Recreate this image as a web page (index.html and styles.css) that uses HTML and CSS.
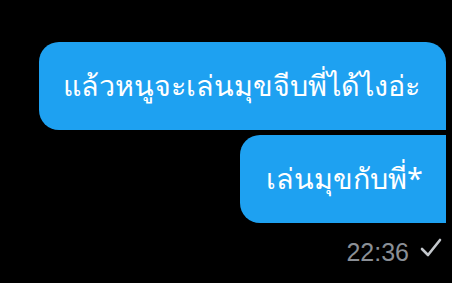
FILE: index.html
```html
<!doctype html>
<html lang="th">
<head>
	<meta charset="UTF-8">
	<title>แชท</title>
	<link rel="stylesheet" href="styles.css">
</head>
<body>
<!--ข้อความ-->
<section class="chat">
	<div class="bubble first">แล้วหนูจะเล่นมุขจีบพี่ได้ไงอ่ะ</div>
	<div class="bubble second">เล่นมุขกับพี่*</div>
	<div class="meta">
		<span class="time">22:36</span>
		<svg class="tick" width="22" height="20" viewBox="0 0 22 20"><path d="M2 11 L8 17 L20 2" fill="none" stroke="#c3c7cc" stroke-width="2.6" stroke-linecap="round" stroke-linejoin="round"/></svg>
	</div>
</section>
</body>
</html>
```
FILE: styles.css
```css
*{margin:0;padding:0}
html,body{background:#000;height:100%}
body{
	font-family:"Noto Sans","DejaVu Sans",sans-serif;
	overflow:hidden;
}
.chat{
	display:flex;
	flex-direction:column;
	align-items:flex-end;
	padding:42px 6px 0 0;
	gap:5px;
}
.bubble{
	background:#1ea1f1;
	color:#fff;
	height:88px;
	box-sizing:border-box;
	display:flex;
	align-items:center;
	font-size:28.7px;
	border-radius:20px 0 0 20px;
}
.bubble.first{
	width:407px;
	padding-left:24px;
	border-radius:20px 20px 0 20px;
}
.bubble.second{
	width:206px;
	padding-left:26px;
}
.meta{
	display:flex;
	align-items:center;
	gap:11px;
	padding:10px 4px 0 0;
}
.time{
	color:#8a8f96;
	font-family:"Liberation Sans",sans-serif;
	font-size:25px;
}
.tick{display:block;margin-top:-9px}
```
